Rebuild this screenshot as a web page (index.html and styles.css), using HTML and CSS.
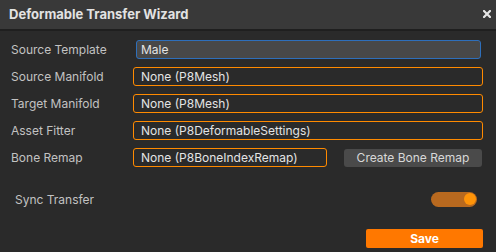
FILE: index.html
```html
<!DOCTYPE html>
<html lang="en">

<head>
  <meta charset="UTF-8">
  <title>Deformable Transfer Wizard</title>
  <link rel="stylesheet" href="styles.css">
</head>

<body>
  <div class="window">
    <div class="titlebar">
      <span class="title">Deformable Transfer Wizard</span>
      <span class="close">
        <svg width="8" height="8" viewBox="0 0 8 8">
          <path d="M1 1 L7 7 M7 1 L1 7" stroke="#e6e6e6" stroke-width="2.2" stroke-linecap="square" />
        </svg>
      </span>
    </div>
    <div class="content">
      <div class="row first">
        <label>Source Template</label>
        <div class="field template">Male</div>
      </div>
      <div class="row">
        <label>Source Manifold</label>
        <div class="field">None (P8Mesh)</div>
      </div>
      <div class="row">
        <label>Target Manifold</label>
        <div class="field">None (P8Mesh)</div>
      </div>
      <div class="row">
        <label>Asset Fitter</label>
        <div class="field">None (P8DeformableSettings)</div>
      </div>
      <div class="row">
        <label>Bone Remap</label>
        <div class="field short">None (P8BoneIndexRemap)</div>
        <button class="btn">Create Bone Remap</button>
      </div>
      <div class="row sync">
        <label>Sync Transfer</label>
        <span class="toggle"><span class="knob"></span></span>
      </div>
      <div class="footer">
        <button class="save">Save</button>
      </div>
    </div>
  </div>
</body>

</html>
```

FILE: styles.css
```css
* {
  margin: 0;
  padding: 0;
  box-sizing: border-box;
}

body {
  width: 496px;
  height: 252px;
  background-color: #2a2a2a;
  font-family: Inter, "Noto Sans", sans-serif;
  overflow: hidden;
}

.titlebar {
  height: 31px;
  display: flex;
  align-items: center;
  justify-content: space-between;
  padding: 0 5px 2px 9px;
  background-color: #393939;
  border-bottom: 2px solid #1f1f1f;
}

.title {
  color: #e2e2e2;
  font-size: 13px;
  font-weight: 700;
}

.close {
  display: flex;
  width: 8px;
  height: 8px;
}

.content {
  padding: 9px 13px 0 11px;
}

.row {
  display: flex;
  align-items: center;
  height: 19px;
  margin-top: 8px;
}

.row.first {
  margin-top: 0;
}

.row label {
  width: 122px;
  font-size: 12px;
  color: #c2c2c2;
}

.field {
  flex: 1;
  height: 19px;
  padding: 0 7px;
  font-size: 12px;
  line-height: 17px;
  color: #e4e4e4;
  border: 1px solid #ff8a00;
  border-radius: 3px;
  background-color: #2a2a2a;
  white-space: nowrap;
}

.field.template {
  margin-left: 3px;
  margin-right: 2px;
  padding-left: 4px;
  border-color: #2e6fbb;
  background-color: #484848;
}

.field.short {
  flex: none;
  width: 194px;
}

.btn {
  margin-left: 17px;
  width: 138px;
  height: 18px;
  border: none;
  border-radius: 3px;
  background-color: #4a4a4a;
  color: #d8d8d8;
  font-family: inherit;
  font-size: 12px;
}

.row.sync {
  margin-top: 24px;
  height: 16px;
  justify-content: space-between;
  padding: 0 6px 0 4px;
}

.toggle {
  display: flex;
  align-items: center;
  justify-content: flex-end;
  width: 46px;
  height: 15px;
  padding: 0 1px;
  border-radius: 8px;
  background-color: #b8691f;
}

.knob {
  width: 12px;
  height: 12px;
  border-radius: 50%;
  background-color: #ff9408;
}

.footer {
  display: flex;
  justify-content: flex-end;
  margin-top: 22px;
}

.save {
  width: 117px;
  height: 19px;
  border: none;
  border-radius: 2px;
  background-color: #ff7800;
  color: #ffffff;
  font-family: inherit;
  font-size: 12px;
  font-weight: 700;
}
```
